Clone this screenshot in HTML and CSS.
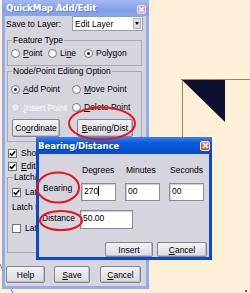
FILE: index.html
```html
<!DOCTYPE html>
<html lang="en">
<head>
    <meta charset="UTF-8">
    <meta name="viewport" content="width=device-width, initial-scale=1.0">
    <title>QuickMap Add/Edit</title>
    <link rel="stylesheet" href="styles.css">
</head>
<body>

    <div class="desktop">

        <svg class="map" width="250" height="293" viewBox="0 0 250 293">
            <line x1="181" y1="79.5" x2="250" y2="79.5" stroke="#a08466" stroke-width="1"/>
            <line x1="182.5" y1="80" x2="182.5" y2="138" stroke="#a08466" stroke-width="1"/>
            <polygon points="182,80 225,80 225,122" fill="#0b1030"/>
            <line x1="0" y1="264" x2="6" y2="278" stroke="#8a7a6a" stroke-width="1"/>
            <line x1="11" y1="289" x2="13" y2="293" stroke="#8a7a6a" stroke-width="1"/>
            <rect x="245" y="290" width="2" height="2" fill="#6a5a4a"/>
        </svg>

        <!-- main tool window -->
        <div class="main_win">
            <div class="titlebar">
                <span class="win_title">QuickMap Add/Edit</span>
                <span class="close_btn inactive">
                    <svg width="7" height="7" viewBox="0 0 7 7"><path d="M1 1L6 6M6 1L1 6" stroke="#fff" stroke-width="1.5"/></svg>
                </span>
            </div>
            <div class="win_body">
                <div class="layer_row">
                    <span class="layer_label">Save to Layer:</span>
                    <div class="select_box">
                        <span class="select_text">Edit Layer</span>
                        <span class="drop_btn"><span class="arrow"></span></span>
                    </div>
                </div>

                <fieldset class="group feature_group">
                    <legend>Feature Type</legend>
                    <div class="radio_row feature_cols">
                        <label class="opt"><span class="radio"></span><span><u>P</u>oint</span></label>
                        <label class="opt"><span class="radio"></span><span>Li<u>n</u>e</span></label>
                        <label class="opt"><span class="radio checked"></span><span>Poly<u>g</u>on</span></label>
                    </div>
                </fieldset>

                <fieldset class="group node_group">
                    <legend>Node/Point Editing Option</legend>
                    <div class="radio_row node_cols">
                        <label class="opt"><span class="radio checked"></span><span><u>A</u>dd Point</span></label>
                        <label class="opt"><span class="radio"></span><span><u>M</u>ove Point</span></label>
                    </div>
                    <div class="radio_row node_cols second_row">
                        <label class="opt disabled"><span class="radio"></span><span><u>I</u>nsert Point</span></label>
                        <label class="opt"><span class="radio"></span><span><u>D</u>elete Point</span></label>
                    </div>
                    <div class="node_btns">
                        <button class="btn coord_btn">Co<u>o</u>rdinate</button>
                        <button class="btn bear_btn"><u>B</u>earing/Dist</button>
                    </div>
                </fieldset>

                <label class="check_row first_check"><span class="check on"><svg width="7" height="7" viewBox="0 0 7 7"><path d="M0.8 3.4L2.7 5.4L6.2 1.3" fill="none" stroke="#000" stroke-width="1.6"/></svg></span><span>Show</span></label>
                <label class="check_row second_check"><span class="check on"><svg width="7" height="7" viewBox="0 0 7 7"><path d="M0.8 3.4L2.7 5.4L6.2 1.3" fill="none" stroke="#000" stroke-width="1.6"/></svg></span><span><u>E</u>dit</span></label>

                <fieldset class="group latch_group">
                    <legend>Latch/Align</legend>
                    <label class="check_row"><span class="check on"><svg width="7" height="7" viewBox="0 0 7 7"><path d="M0.8 3.4L2.7 5.4L6.2 1.3" fill="none" stroke="#000" stroke-width="1.6"/></svg></span><span>Latch</span></label>
                    <div class="latch_label">Latch to</div>
                    <label class="check_row last_check"><span class="check"></span><span>Latch</span></label>
                </fieldset>

                <div class="bottom_btns">
                    <button class="btn help_btn">Help</button>
                    <button class="btn save_btn"><u>S</u>ave</button>
                    <button class="btn cancel_btn"><u>C</u>ancel</button>
                </div>
            </div>
        </div>

        <!-- bearing dialog -->
        <div class="dialog">
            <div class="dlg_title">
                <span class="win_title">Bearing/Distance</span>
                <span class="close_btn active">
                    <svg width="7" height="7" viewBox="0 0 7 7"><path d="M1 1L6 6M6 1L1 6" stroke="#fff" stroke-width="1.5"/></svg>
                </span>
            </div>
            <div class="dlg_body">
                <div class="dlg_row head_row">
                    <span class="row_label"></span>
                    <span class="col_head">Degrees</span>
                    <span class="col_head">Minutes</span>
                    <span class="col_head">Seconds</span>
                </div>
                <div class="dlg_row bearing_row">
                    <span class="row_label">Bearing</span>
                    <div class="text_box">270<span class="caret"></span></div>
                    <div class="text_box">00</div>
                    <div class="text_box">00</div>
                </div>
                <div class="dlg_row dist_row">
                    <span class="row_label dist_label">Distance</span>
                    <div class="text_box dist_box">50.00</div>
                </div>
                <div class="dlg_btns">
                    <button class="btn insert_btn">Insert</button>
                    <button class="btn dlg_cancel"><u>C</u>ancel</button>
                </div>
            </div>
        </div>

        <svg class="marks" width="250" height="293" viewBox="0 0 250 293">
            <ellipse cx="102" cy="123.5" rx="33" ry="16" fill="none" stroke="#e2181a" stroke-width="2"/>
            <ellipse cx="58" cy="187.5" rx="21" ry="15" fill="none" stroke="#e2181a" stroke-width="2"/>
            <ellipse cx="61" cy="220.5" rx="21" ry="9.5" fill="none" stroke="#e2181a" stroke-width="2"/>
        </svg>
    </div>

</body>
</html>
```

FILE: styles.css
```css
body{
    margin: 0;
    padding: 0;
    font-family: "Liberation Sans", Arial, sans-serif;
    font-size: 8.5px;
    color: #000;
}
u{
    text-decoration-thickness: 1px;
    text-underline-offset: 1px;
}

.desktop{
    position: relative;
    width: 250px;
    height: 293px;
    background-color: #fdefd8;
    overflow: hidden;
}
.map{
    position: absolute;
    left: 0;
    top: 0;
}
.marks{
    position: absolute;
    left: 0;
    top: 0;
    pointer-events: none;
}

/* main window */
.main_win{
    position: absolute;
    left: 2px;
    top: 0;
    width: 147px;
    height: 289px;
    display: flex;
    flex-direction: column;
}
.titlebar{
    height: 16px;
    display: flex;
    justify-content: space-between;
    align-items: center;
    padding: 0 3px 0 4px;
    background: linear-gradient(#a3b9f3, #829fe7 60%, #8aa5ea);
}
.win_title{
    color: #fff;
    font-weight: bold;
    font-size: 8.6px;
    font-family: "DejaVu Sans", sans-serif;
    letter-spacing: -0.1px;
    text-shadow: 1px 1px 0 rgba(40, 60, 140, 0.35);
}
.close_btn{
    width: 9px;
    height: 9px;
    border: 1px solid #fff;
    border-radius: 2px;
    box-sizing: border-box;
    display: flex;
    justify-content: center;
    align-items: center;
    margin-top: 3px;
}
.close_btn.inactive{
    background-color: #c99bdc;
    border-color: #efe2f6;
}
.close_btn.active{
    width: 10px;
    height: 10px;
    margin-top: 0;
    background: linear-gradient(#f08a60, #d9471d);
    border-color: #fbe7dc;
}

.win_body{
    flex: 1;
    background-color: #d6d4dc;
    border: 3px solid #93abee;
    border-top: 0;
}

.layer_row{
    display: flex;
    align-items: center;
    height: 15px;
}
.layer_label{
    width: 66px;
    padding-left: 1px;
}
.select_box{
    display: flex;
    align-items: center;
    justify-content: space-between;
    width: 71px;
    height: 15px;
    box-sizing: border-box;
    border: 1px solid #8e9db8;
    background-color: #fff;
}
.select_text{
    padding-left: 2px;
}
.drop_btn{
    width: 8px;
    height: 11px;
    margin-right: 1px;
    background-color: #dedce2;
    border: 1px solid #b4b2ba;
    box-sizing: border-box;
    display: flex;
    justify-content: center;
    align-items: center;
}
.arrow{
    width: 0;
    height: 0;
    border-left: 2.5px solid transparent;
    border-right: 2.5px solid transparent;
    border-top: 3px solid #000;
}

/* group boxes */
.group{
    margin: 0 4px 0 2px;
    padding: 0 3px;
    border: 1px solid #a9a8b2;
    min-width: 0;
}
.group legend{
    padding: 0 1px;
    margin-left: 1px;
    line-height: 10px;
}
.feature_group{
    margin-top: 4px;
    padding-top: 3px;
    padding-bottom: 7px;
}
.node_group{
    margin-top: 0;
    padding-top: 8px;
    padding-bottom: 4px;
}
.latch_group{
    margin-top: 1px;
    padding: 5px 3px 19px 4px;
}

.radio_row{
    display: grid;
    height: 10px;
    align-items: center;
}
.feature_cols{
    grid-template-columns: 37px 36px auto;
}
.node_cols{
    grid-template-columns: 61px auto;
}
.second_row{
    margin-top: 8px;
}
.opt{
    display: flex;
    align-items: center;
    gap: 3px;
    white-space: nowrap;
}
.radio{
    width: 9px;
    height: 9px;
    box-sizing: border-box;
    border-radius: 50%;
    border: 1px solid #7a7b86;
    background: radial-gradient(circle at 40% 40%, #fff 40%, #dedde4);
    display: flex;
    justify-content: center;
    align-items: center;
    flex-shrink: 0;
}
.radio.checked::after{
    content: "";
    width: 3px;
    height: 3px;
    border-radius: 50%;
    background-color: #1f1f24;
}
.opt.disabled{
    color: #eeeef2;
    text-shadow: 1px 1px 0 #fff, 0 0 1px #b4b4bc;
}
.opt.disabled .radio{
    border-color: #c8c8ce;
    background: #e9e8ed;
}

.node_btns{
    display: flex;
    gap: 17px;
    margin-top: 7px;
    padding-left: 1px;
}

/* buttons */
.btn{
    font-family: "Liberation Sans", Arial, sans-serif;
    font-size: 8.5px;
    color: #000;
    padding: 0;
    margin: 0;
    border: 1px solid #85858f;
    border-radius: 2px;
    background: linear-gradient(#f2f1f4, #dcdbe1);
    box-shadow: inset -1px -1px 0 #bdbcc4;
}
.coord_btn{
    width: 48px;
    height: 18px;
}
.bear_btn{
    width: 56px;
    height: 18px;
}

.check_row{
    display: flex;
    align-items: center;
    gap: 4px;
    height: 10px;
    white-space: nowrap;
    margin-top: 3px;
}
.first_check{
    margin-top: 6px;
    padding-left: 3px;
}
.second_check{
    padding-left: 3px;
}
.latch_group .check_row{
    margin-top: 0;
}
.check{
    width: 9px;
    height: 9px;
    box-sizing: border-box;
    border: 1px solid #6f707c;
    background-color: #fff;
    display: flex;
    justify-content: center;
    align-items: center;
    flex-shrink: 0;
}
.latch_label{
    margin-top: 5px;
    line-height: 10px;
    white-space: nowrap;
}
.latch_group .last_check{
    margin-top: 11px;
}

.bottom_btns{
    display: flex;
    gap: 9px;
    margin-top: 13px;
    padding-left: 1px;
}
.help_btn{
    width: 39px;
    height: 17px;
}
.save_btn{
    width: 36px;
    height: 17px;
}
.cancel_btn{
    width: 41px;
    height: 17px;
    margin-left: 1px;
}

/* bearing / distance dialog */
.dialog{
    position: absolute;
    left: 36px;
    top: 137px;
    width: 176px;
    height: 123px;
    display: flex;
    flex-direction: column;
}
.dlg_title{
    height: 17px;
    flex-shrink: 0;
    display: flex;
    justify-content: space-between;
    align-items: center;
    padding: 0 2px;
    background: linear-gradient(#3a82f0, #0a5ad8 35%, #0550d2 80%, #0a4ec6);
}
.dlg_title .win_title{
    text-shadow: 1px 1px 0 rgba(0, 20, 90, 0.5);
}
.dlg_body{
    flex: 1;
    background-color: #d6d4dc;
    border: 3px solid #0a48d0;
    border-top: 0;
    padding-top: 11px;
}
.dlg_row{
    display: flex;
    gap: 9px;
}
.head_row{
    height: 10px;
    line-height: 10px;
}
.bearing_row{
    margin-top: 8px;
}
.dist_row{
    margin-top: 9px;
}
.row_label{
    width: 29px;
    flex-shrink: 0;
    padding-left: 4px;
    line-height: 10px;
    white-space: nowrap;
}
.dist_label{
    padding-top: 3px;
    padding-left: 3px;
    width: 29px;
}
.col_head{
    width: 34px;
    flex-shrink: 0;
    padding-left: 1px;
    white-space: nowrap;
}
.text_box{
    width: 35px;
    height: 18px;
    flex-shrink: 0;
    box-sizing: border-box;
    background-color: #fff;
    border: 1px solid #8d8c96;
    box-shadow: inset 1px 1px 0 #cfced6;
    padding: 2px 0 0 2px;
    line-height: 10px;
    display: flex;
    align-items: flex-start;
}
.caret{
    width: 1px;
    height: 10px;
    background-color: #000;
}
.dist_box{
    width: 53px;
    height: 19px;
}
.dlg_btns{
    display: flex;
    justify-content: flex-end;
    gap: 4px;
    margin-top: 13px;
    padding-right: 2px;
}
.insert_btn{
    width: 48px;
    height: 15px;
}
.dlg_cancel{
    width: 50px;
    height: 15px;
}
```
